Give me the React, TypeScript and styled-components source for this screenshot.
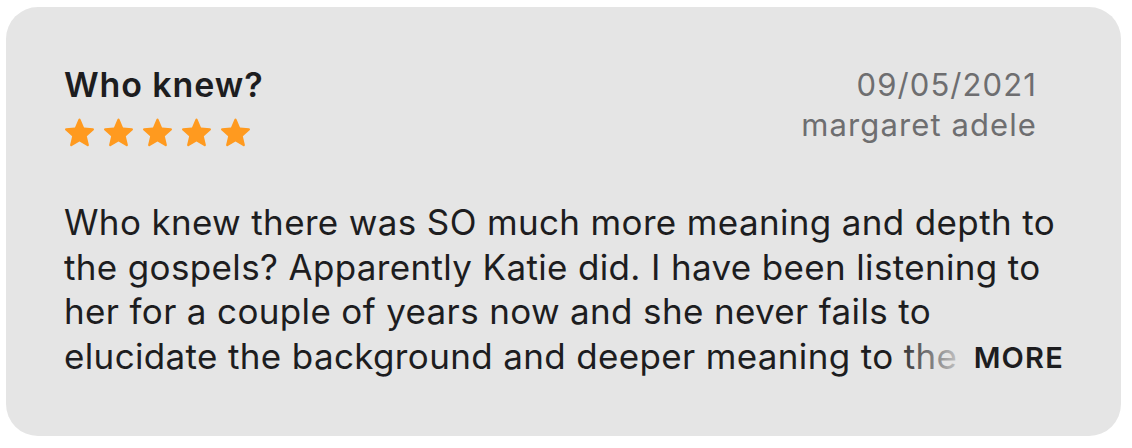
import styled, { createGlobalStyle } from 'styled-components'

const GlobalStyle = createGlobalStyle`
  html, body {
    margin: 0;
    padding: 0;
    background: #ffffff;
    font-family: Inter, "Liberation Sans", sans-serif;
    -webkit-font-smoothing: antialiased;
  }
`

const review = {
  title: 'Who knew?',
  rating: 5,
  date: '09/05/2021',
  author: 'margaret adele',
  body:
    'Who knew there was SO much more meaning and depth to the gospels? Apparently Katie did. I have been listening to her for a couple of years now and she never fails to elucidate the background and deeper meaning to the scriptures. Highly recommend this podcast to anyone wanting to dig deeper.',
}

const Star = () => (
  <svg width='33' height='31' viewBox='0 0 24 23' aria-hidden>
    <path
      d='M12 1.2c.35 0 .62.2.76.52l2.6 6.1 6.6.56c.36.03.64.25.75.58.11.33.01.68-.26.91l-5 4.33 1.5 6.45c.08.35-.05.69-.34.89-.28.2-.64.21-.95.03L12 18.14l-5.66 3.43c-.3.18-.67.17-.95-.03-.29-.2-.42-.54-.34-.89l1.5-6.45-5-4.33c-.27-.23-.37-.58-.26-.91.11-.33.39-.55.75-.58l6.6-.56 2.6-6.1c.14-.32.41-.52.76-.52z'
      fill='#ff9a1f'
    />
  </svg>
)

export default function App() {
  return (
    <>
      <GlobalStyle />
      <Page>
        <Card>
          <Header>
            <TitleBlock>
              <Title>{review.title}</Title>
              <Stars>
                {Array.from({ length: review.rating }).map((_, i) => (
                  <Star key={i} />
                ))}
              </Stars>
            </TitleBlock>
            <Meta>
              <MetaLine>{review.date}</MetaLine>
              <MetaLine>{review.author}</MetaLine>
            </Meta>
          </Header>
          <Body>
            <BodyText>{review.body}</BodyText>
            <More>MORE</More>
          </Body>
        </Card>
      </Page>
    </>
  )
}

const Page = styled.div`
  padding: 7px 11px 12px 6px;
`
const Card = styled.div`
  box-sizing: border-box;
  width: 1115px;
  height: 429px;
  background: #e5e5e5;
  border-radius: 32px;
  padding: 58px 57px 0 58px;
  display: flex;
  flex-direction: column;
`
const Header = styled.div`
  display: flex;
  justify-content: space-between;
  align-items: flex-start;
`
const TitleBlock = styled.div`
  display: flex;
  flex-direction: column;
  gap: 12px;
`
const Title = styled.div`
  font-size: 34px;
  line-height: 40px;
  font-weight: 600;
  color: #1d1d1f;
  letter-spacing: 0.9px;
`
const Stars = styled.div`
  display: flex;
  gap: 6px;
  margin-left: -1px;
`
const Meta = styled.div`
  display: flex;
  flex-direction: column;
  align-items: flex-end;
  margin-right: 27px;
  margin-top: 0;
`
const MetaLine = styled.div`
  font-size: 31px;
  line-height: 40px;
  color: #6e6e70;
  letter-spacing: 1.1px;
`
const Body = styled.div`
  position: relative;
  margin-top: 52px;
  height: 178px;
  overflow: hidden;
`
const BodyText = styled.p`
  margin: 0;
  font-size: 35px;
  line-height: 44.5px;
  color: #1d1d1f;
  letter-spacing: 0.35px;
`
const More = styled.button`
  position: absolute;
  right: 0;
  bottom: 0;
  height: 44.5px;
  border: none;
  padding: 3px 0 0 80px;
  font-family: inherit;
  font-size: 29px;
  font-weight: 600;
  letter-spacing: 1.2px;
  color: #1d1d1f;
  background: linear-gradient(
    to right,
    rgba(229, 229, 229, 0) 0,
    rgba(229, 229, 229, 0.75) 58px,
    #e5e5e5 76px,
    #e5e5e5 100%
  );
`
